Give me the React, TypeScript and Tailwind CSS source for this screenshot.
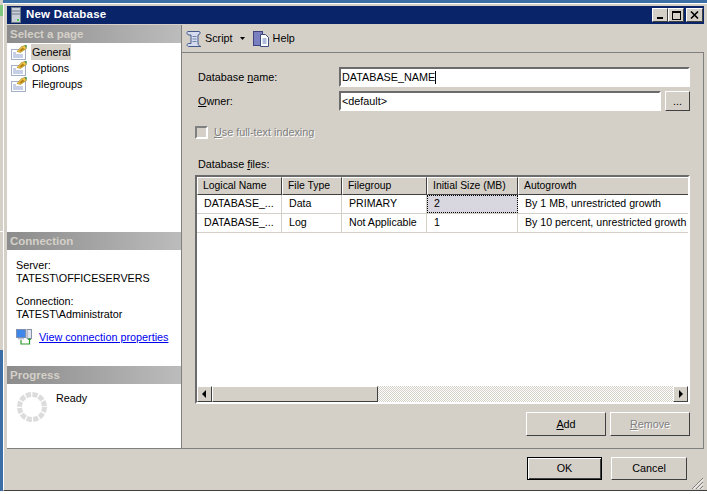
import React from "react";

const raised = "border border-t-white border-l-white border-r-[#404040] border-b-[#404040] bg-[#d4d0c8]";
const sunken = "border-2 border-t-[#6b6b6b] border-l-[#6b6b6b] border-r-white border-b-white bg-white";

function PageIcon() {
  return (
    <svg width="16" height="15" viewBox="0 0 16 15" className="shrink-0">
      <rect x="0.5" y="4.5" width="14" height="10" fill="#fff" stroke="#a3aec8" />
      <path d="M2 8h3M2 10h10M2 12h10" stroke="#8c9fcb" strokeWidth="1" />
      <path d="M6 6.5 L10.5 1.5 L14 0.5 L15.5 3.5 L9.5 7.5 Z" fill="#f1c84a" stroke="#8a6a10" strokeWidth="0.5" />
      <path d="M8 6 L11.5 2.5 L13.5 4 L10 6.5 Z" fill="#b58314" />
      <path d="M13.5 0 L16 0.5 L15.5 3 Z" fill="#2f8f2f" />
    </svg>
  );
}

function ScriptIcon() {
  return (
    <svg width="18" height="18" viewBox="0 0 18 18" className="shrink-0">
      <path d="M3 1.5 H14 C15.5 1.5 15.5 4 14 4.5 L13 5 V13 C13 15 14.5 16.5 16 16.5 H4 C2 16.5 1 14 3.5 13.5 H6 V5 H4 C1.5 5 1.5 1.5 3 1.5 Z" fill="#d5dced" stroke="#43598c" />
      <path d="M7.5 6.5h4M7.5 9h4M7.5 11.5h4" stroke="#6f83b0" />
    </svg>
  );
}

function HelpIcon() {
  return (
    <svg width="17" height="18" viewBox="0 0 17 18" className="shrink-0">
      <rect x="0.5" y="1.5" width="9" height="14" fill="#7a7fc0" stroke="#3d4480" />
      <path d="M7.5 4.5H12.5L15.5 7.5V16.5H7.5Z" fill="#fff" stroke="#3d4f80" />
      <path d="M9.5 9h4M9.5 11h4M9.5 13h4" stroke="#5f7bb8" />
    </svg>
  );
}

function ConnIcon() {
  return (
    <svg width="17" height="16" viewBox="0 0 17 16" className="shrink-0">
      <rect x="0.5" y="0.5" width="9" height="8" fill="#3f86ea" stroke="#7f8fb0" />
      <rect x="2" y="9" width="6" height="1.5" fill="#b9c2d6" />
      <rect x="11" y="0.5" width="4.5" height="9" fill="#dfe3ee" stroke="#8791aa" />
      <path d="M5 11v4h8.5v-5" fill="none" stroke="#2e9a2e" strokeWidth="1.2" />
      <path d="M11.5 11 L13.5 9 L15.5 11 Z" fill="#2e9a2e" />
    </svg>
  );
}

function Spinner() {
  return (
    <svg width="30" height="30" viewBox="0 0 30 30" className="shrink-0">
      <circle cx="15" cy="15" r="12.5" fill="none" stroke="#dcdcdc" strokeWidth="5" strokeDasharray="5.2 1.35" />
    </svg>
  );
}

function SectionHead({ label }: { label: string }) {
  return (
    <div className="h-[18px] shrink-0 flex items-center pl-[3px] pt-[1px] bg-gradient-to-r from-[#8c8c8c] to-[#bcbcbc] text-[#d4d0c8] font-bold text-[11.5px] leading-none">
      {label}
    </div>
  );
}

function NavItem({ label, active }: { label: string; active?: boolean }) {
  return (
    <div className="h-4 flex items-center pl-[4px] gap-[4px]">
      <PageIcon />
      <span className={"px-[1px] h-4 leading-4 " + (active ? "bg-[#d4d0c8]" : "")}>{label}</span>
    </div>
  );
}

function U({ children }: { children: React.ReactNode }) {
  return <span className="underline underline-offset-1">{children}</span>;
}

const cols = ["w-[85px]", "w-[60px]", "w-[85px]", "w-[91px]", "w-[175px]"];

function HeaderCell({ label, w }: { label: string; w: string }) {
  return (
    <div className={w + " h-[18px] shrink-0 flex items-center pl-[5px] whitespace-nowrap overflow-hidden text-[10.4px] " + raised}>{label}</div>
  );
}

function Cell({ label, w, focus }: { label: string; w: string; focus?: boolean }) {
  return (
    <div
      className={
        w + " pl-[7px] shrink-0 h-full flex items-center whitespace-nowrap overflow-hidden border-r border-[#d4d0c8] " +
        (focus ? "bg-[#d8d6de] outline-1 outline-dotted outline-black -outline-offset-1" : "")
      }
    >
      {label}
    </div>
  );
}

function Row({ cells, focus }: { cells: string[]; focus?: boolean }) {
  return (
    <div className="flex h-[19px] border-b border-[#d4d0c8] w-max text-[10.6px]">
      <Cell label={cells[0]} w={cols[0]} />
      <Cell label={cells[1]} w={cols[1]} />
      <Cell label={cells[2]} w={cols[2]} />
      <Cell label={cells[3]} w={cols[3]} focus={focus} />
      <Cell label={cells[4]} w={cols[4]} />
    </div>
  );
}

function ScrollBtn({ dir }: { dir: "l" | "r" }) {
  return (
    <div className={"w-[15px] h-[16px] shrink-0 flex items-center justify-center " + raised}>
      <svg width="5" height="8" viewBox="0 0 5 8">
        <path d={dir === "l" ? "M4 0V8L0 4Z" : "M1 0V8L5 4Z"} fill="#000" />
      </svg>
    </div>
  );
}

export default function App() {
  return (
    <div className="w-[707px] h-[494px] bg-white overflow-hidden flex font-['Liberation_Sans',Arial,sans-serif] text-[10.8px] text-black">
      <div className="w-[3px] h-[491px] shrink-0 flex flex-col">
        <div className="h-[5px] bg-[#d4d0c8]" />
        <div className="h-[11px] bg-[#7fc77f]" />
        <div className="h-[215px] bg-[#d4d0c8]" />
        <div className="h-px bg-white" />
        <div className="h-[118px] bg-[#d4d0c8]" />
        <div className="flex-1 bg-[#3a6ea5]" />
      </div>
      <div className="flex-1 h-[491px] flex flex-col">
        <div className="h-[3px] bg-[#3a6ea5] shrink-0" />
        <div className="flex-1 flex flex-col bg-[#d4d0c8] border border-t-white border-l-white border-r-[#404040] border-b-[#404040] pt-[2px] px-[3px] min-h-0">
          {/* Title bar */}
          <div className="h-[18px] shrink-0 bg-[#0a246a] flex items-center pl-[4px] pr-[1px]">
            <svg width="10" height="16" viewBox="0 0 10 16" className="shrink-0">
              <rect x="0.5" y="0.5" width="9" height="15" fill="#c9cfd8" stroke="#6f7a88" />
              <path d="M1 4h8M1 7h8" stroke="#6f7a88" />
              <rect x="6" y="12" width="2" height="2" fill="#4fd04f" />
            </svg>
            <span className="ml-[5px] text-white font-bold text-[11.5px] tracking-[0.2px]">New Database</span>
            <div className="ml-auto flex items-center">
              <div className={"w-4 h-[14px] flex items-end justify-center pb-[2px] " + raised}>
                <div className="w-[6px] h-[2px] bg-black" />
              </div>
              <div className={"w-4 h-[14px] flex items-center justify-center " + raised}>
                <div className="w-[9px] h-[9px] border border-t-2 border-black" />
              </div>
              <div className={"w-[17px] h-[14px] ml-[2px] flex items-center justify-center " + raised}>
                <svg width="9" height="8" viewBox="0 0 9 8">
                  <path d="M1 0.5L8 7.5M8 0.5L1 7.5" stroke="#000" strokeWidth="1.6" />
                </svg>
              </div>
            </div>
          </div>

          {/* Body */}
          <div className="h-[424px] shrink-0 mt-[1px] flex border-b border-[#808080]">
            <div className="w-[175px] shrink-0 bg-white border-r border-[#808080] flex flex-col">
              <SectionHead label="Select a page" />
              <div className="h-[189px] shrink-0 flex flex-col pt-[1px]">
                <NavItem label="General" active />
                <NavItem label="Options" />
                <NavItem label="Filegroups" />
              </div>
              <SectionHead label="Connection" />
              <div className="h-[116px] shrink-0 pl-[9px] pt-[9px] leading-[13px]">
                <div>Server:</div>
                <div>TATEST\OFFICESERVERS</div>
                <div className="mt-[10px]">Connection:</div>
                <div>TATEST\Administrator</div>
                <div className="flex items-center gap-[6px] mt-[8px]">
                  <ConnIcon />
                  <span className="text-[#0000ee] underline">View connection properties</span>
                </div>
              </div>
              <SectionHead label="Progress" />
              <div className="flex pl-[10px] pt-[8px] gap-[9px]">
                <Spinner />
                <span className="leading-[13px]">Ready</span>
              </div>
            </div>

            {/* Right */}
            <div className="flex-1 flex flex-col min-w-0">
              <div className="h-[28px] shrink-0 flex items-center border-b border-[#808080] pl-[3px]">
                <ScriptIcon />
                <span className="ml-[2px]">Script</span>
                <svg width="5" height="3" viewBox="0 0 5 3" className="ml-[7px]"><path d="M0 0H5L2.5 3Z" fill="#000" /></svg>
                <span className="ml-[8px]"><HelpIcon /></span>
                <span className="ml-[3px]">Help</span>
              </div>
              <div className="flex-1 min-h-0 border-r border-[#808080] pl-[13px] pr-[13px] pt-[14px] flex flex-col">
                <div className="flex items-center h-[20px] shrink-0">
                  <span className="w-[144px] pl-[3px] shrink-0">Database <U>n</U>ame:</span>
                  <div className={"flex-1 h-[20px] flex items-center pl-[1px] " + sunken}>DATABASE_NAME<span className="w-px h-[13px] bg-black" /></div>
                </div>
                <div className="flex items-center h-[20px] shrink-0 mt-[4px]">
                  <span className="w-[144px] pl-[3px] shrink-0"><U>O</U>wner:</span>
                  <div className={"flex-1 h-[20px] flex items-center pl-[1px] " + sunken}>&lt;default&gt;</div>
                  <div className={"w-[25px] h-[20px] ml-[4px] shrink-0 flex items-center justify-center " + raised}>...</div>
                </div>
                <div className="flex items-center h-[14px] shrink-0 mt-[14px]">
                  <div className="w-[13px] h-[13px] border-2 border-t-[#808080] border-l-[#808080] border-r-white border-b-white bg-[#d4d0c8] shrink-0" />
                  <span className="ml-[6px] text-[#808080] [text-shadow:1px_1px_0_#fff]"><U>U</U>se full-text indexing</span>
                </div>
                <div className="mt-[19px] h-[13px] leading-[13px] shrink-0 pl-[3px]">Database <U>f</U>iles:</div>
                <div className={"mt-[4px] h-[229px] w-[495px] shrink-0 flex flex-col overflow-hidden " + sunken}>
                  <div className="flex shrink-0 w-max">
                    {["Logical Name", "File Type", "Filegroup", "Initial Size (MB)", "Autogrowth"].map((h, i) => (
                      <HeaderCell key={h} label={h} w={cols[i]} />
                    ))}
                  </div>
                  <Row cells={["DATABASE_...", "Data", "PRIMARY", "2", "By 1 MB, unrestricted growth"]} focus />
                  <Row cells={["DATABASE_...", "Log", "Not Applicable", "1", "By 10 percent, unrestricted growth"]} />
                  <div className="flex-1" />
                  <div className="h-[16px] shrink-0 flex bg-[repeating-conic-gradient(#d4d0c8_0_25%,#ffffff_0_50%)] bg-[length:2px_2px]">
                    <ScrollBtn dir="l" />
                    <div className={"w-[166px] h-[16px] shrink-0 " + raised} />
                    <div className="flex-1" />
                    <ScrollBtn dir="r" />
                  </div>
                </div>
                <div className="flex justify-end gap-[4px] mt-[8px] shrink-0">
                  <div className={"w-[80px] h-[24px] flex items-center justify-center " + raised}><span><U>A</U>dd</span></div>
                  <div className={"w-[80px] h-[24px] flex items-center justify-center text-[#808080] [text-shadow:1px_1px_0_#fff] " + raised}><span><U>R</U>emove</span></div>
                </div>
              </div>
            </div>
          </div>

          {/* Footer */}
          <div className="flex-1 flex justify-end items-start pt-[8px] pr-[17px] gap-[9px] relative">
            <div className="w-[75px] h-[23px] flex items-center justify-center bg-[#d4d0c8] border border-black shadow-[inset_1px_1px_0_#fff,inset_-1px_-1px_0_#404040]">OK</div>
            <div className={"w-[76px] h-[23px] flex items-center justify-center " + raised}>Cancel</div>
            <svg width="13" height="13" viewBox="0 0 13 13" className="absolute right-0 bottom-0">
              <path d="M12 1L1 12M12 5L5 12M12 9L9 12" stroke="#808080" />
              <path d="M12 2.5L2.5 12M12 6.5L6.5 12M12 10.5L10.5 12" stroke="#fff" />
            </svg>
          </div>
        </div>
      </div>
    </div>
  );
}
